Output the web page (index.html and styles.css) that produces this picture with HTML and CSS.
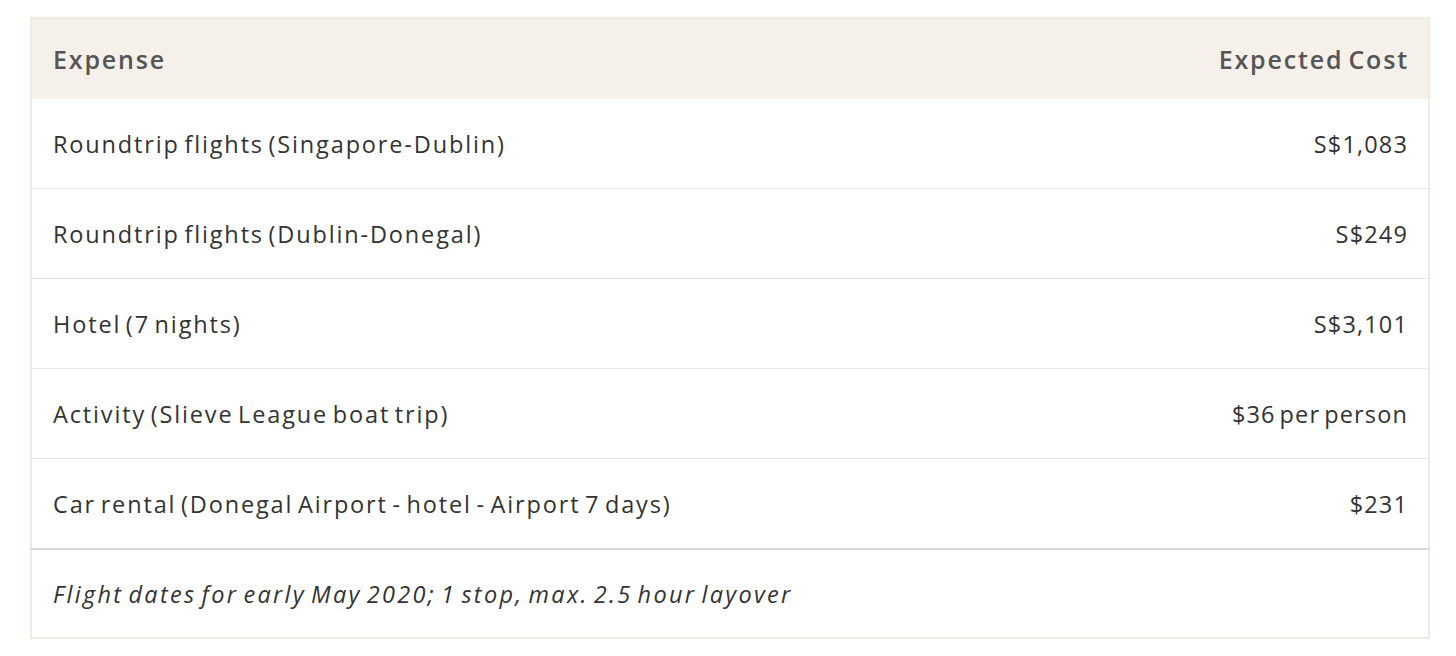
FILE: index.html
```html
<!DOCTYPE html>
<html>
<head>
<meta charset="utf-8">
<link rel="stylesheet" href="styles.css">
</head>
<body>
<div class="wrap">
<table class="costs">
<thead>
<tr><th class="left">Expense</th><th class="right">Expected Cost</th></tr>
</thead>
<tbody>
<tr><td>Roundtrip flights (Singapore-Dublin)</td><td class="right">S$1,083</td></tr>
<tr><td>Roundtrip flights (Dublin-Donegal)</td><td class="right">S$249</td></tr>
<tr><td>Hotel (7 nights)</td><td class="right">S$3,101</td></tr>
<tr><td>Activity (Slieve League boat trip)</td><td class="right">$36 per person</td></tr>
<tr><td>Car rental (Donegal Airport - hotel - Airport 7 days)</td><td class="right">$231</td></tr>
</tbody>
<tfoot>
<tr><td colspan="2" class="note">Flight dates for early May 2020; 1 stop, max. 2.5 hour layover</td></tr>
</tfoot>
</table>
</div>
</body>
</html>
```
FILE: styles.css
```css
html, body { margin: 0; padding: 0; background: #fff; }
.wrap { padding: 17px 0 0 30px; }
.costs {
  width: 1400px;
  border-collapse: collapse;
  border: 2px solid #efebe1;
  font-family: "Open Sans", "Lato", sans-serif;
  font-size: 23.5px;
  letter-spacing: 1.85px;
  word-spacing: -3.3px;
  color: #333;
}
.costs th, .costs td { padding: 0 21px; text-align: left; }
.costs th {
  background: #f5f1ea;
  color: #555;
  font-weight: 600;
  font-size: 25px;
  height: 80px;
}
.costs tbody td { height: 89px; border-top: 1px solid #e6e6e6; }
.costs tbody tr:first-child td { border-top: none; }
.costs .right { text-align: right; padding-right: 19px; }
.costs tbody .right { letter-spacing: 1.15px; padding-right: 20px; }
.costs tfoot td { height: 87px; border-top: 2px solid #d8d9dc; font-style: italic; letter-spacing: 2.3px; }
```
